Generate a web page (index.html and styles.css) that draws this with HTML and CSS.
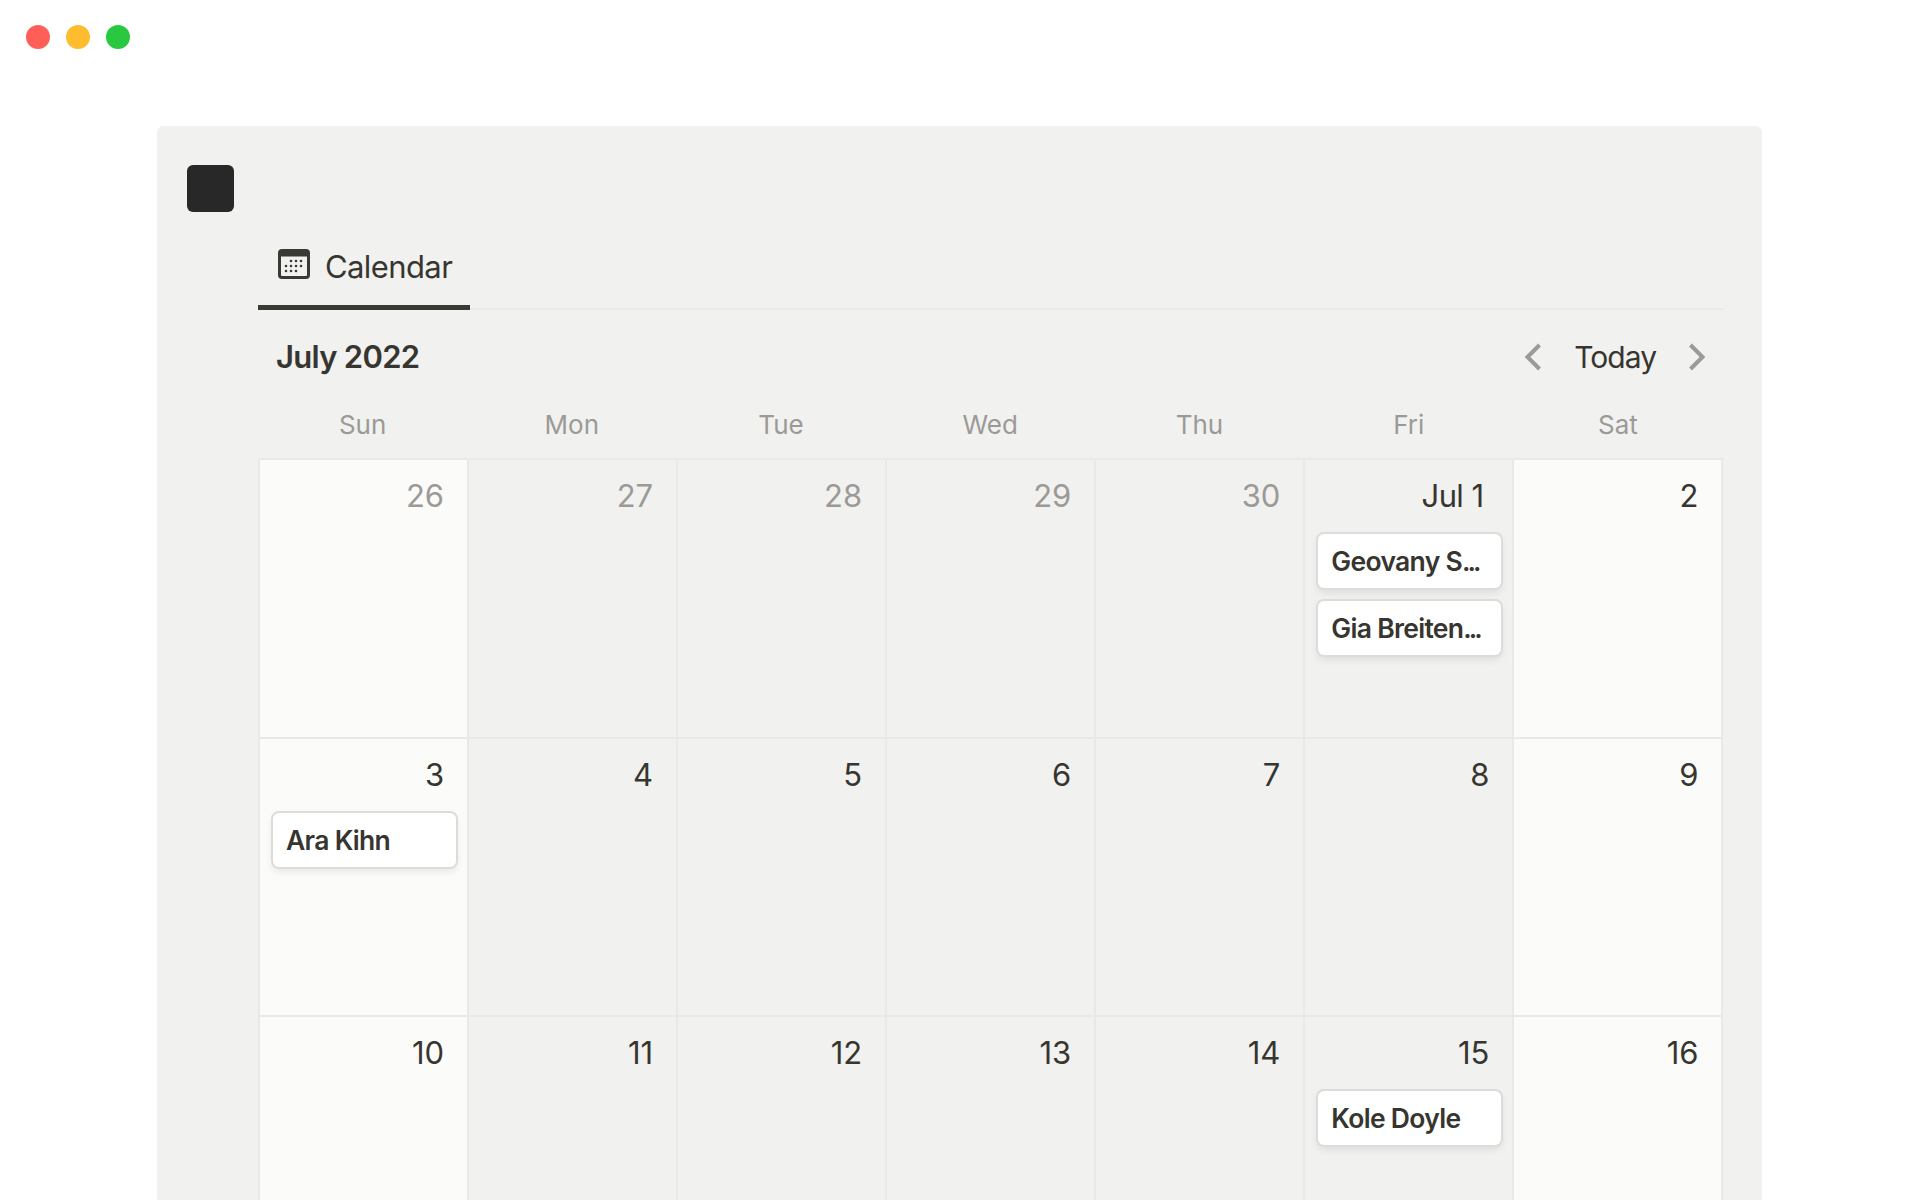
FILE: index.html
```html
<!DOCTYPE html>
<html lang="en">
<head>
<meta charset="utf-8">
<title>Calendar</title>
<link rel="stylesheet" href="styles.css">
</head>
<body>
<div class="lights"><span class="dot red"></span><span class="dot yellow"></span><span class="dot green"></span></div>
<main class="panel">
  <div class="icon-square"></div>
  <div class="content">
    <div class="tabs">
      <div class="tab">
        <svg class="cal-icon" viewBox="0 0 32 30" width="32" height="30">
          <path fill="#3a3933" fill-rule="evenodd" d="M4 0h24a4 4 0 0 1 4 4v22a4 4 0 0 1-4 4H4a4 4 0 0 1-4-4V4a4 4 0 0 1 4-4zM3 7.500V26a1 1 0 0 0 1 1h24a1 1 0 0 0 1-1V7.500z"/>
          <g fill="#3a3933"><circle cx="13" cy="12" r="1.300"/><circle cx="18" cy="12" r="1.300"/><circle cx="23" cy="12" r="1.300"/><circle cx="8" cy="17" r="1.300"/><circle cx="13" cy="17" r="1.300"/><circle cx="18" cy="17" r="1.300"/><circle cx="23" cy="17" r="1.300"/><circle cx="8" cy="22" r="1.300"/><circle cx="13" cy="22" r="1.300"/><circle cx="18" cy="22" r="1.300"/></g>
        </svg>
        <span>Calendar</span>
      </div>
    </div>
    <div class="toolbar">
      <h1 class="month">July 2022</h1>
      <div class="nav">
        <svg class="chev" viewBox="0 0 18 28" width="18" height="28"><path d="M15.500 2 3.500 14 15.500 26" fill="none" stroke="#9b9a97" stroke-width="4"/></svg>
        <span class="today">Today</span>
        <svg class="chev" viewBox="0 0 18 28" width="18" height="28"><path d="M2.500 2 14.500 14 2.500 26" fill="none" stroke="#9b9a97" stroke-width="4"/></svg>
      </div>
    </div>
    <div class="weekdays"><div>Sun</div><div>Mon</div><div>Tue</div><div>Wed</div><div>Thu</div><div>Fri</div><div>Sat</div></div>
    <div class="grid">
      <div class="cell weekend"><div class="date muted">26</div></div>
      <div class="cell"><div class="date muted">27</div></div>
      <div class="cell"><div class="date muted">28</div></div>
      <div class="cell"><div class="date muted">29</div></div>
      <div class="cell"><div class="date muted">30</div></div>
      <div class="cell"><div class="date first-of-month">Jul 1</div><div class="card">Geovany S<span class="dots">...</span></div><div class="card">Gia Breiten<span class="dots">...</span></div></div>
      <div class="cell weekend"><div class="date">2</div></div>

      <div class="cell weekend"><div class="date">3</div><div class="card">Ara Kihn</div></div>
      <div class="cell"><div class="date">4</div></div>
      <div class="cell"><div class="date">5</div></div>
      <div class="cell"><div class="date">6</div></div>
      <div class="cell"><div class="date">7</div></div>
      <div class="cell"><div class="date">8</div></div>
      <div class="cell weekend"><div class="date">9</div></div>

      <div class="cell weekend"><div class="date">10</div></div>
      <div class="cell"><div class="date">11</div></div>
      <div class="cell"><div class="date">12</div></div>
      <div class="cell"><div class="date">13</div></div>
      <div class="cell"><div class="date">14</div></div>
      <div class="cell"><div class="date">15</div><div class="card">Kole Doyle</div></div>
      <div class="cell weekend"><div class="date">16</div></div>
    </div>
  </div>
</main>
</body>
</html>
```
FILE: styles.css
```css
* { box-sizing: border-box; }
html, body { margin: 0; height: 1200px; overflow: hidden; background: #fff; }
body { font-family: Inter, "Liberation Sans", sans-serif; color: #37352f; }
.lights { display: flex; gap: 16px; padding: 25px 0 0 26px; height: 126px; }
.dot { width: 24px; height: 24px; border-radius: 50%; }
.red { background: #ff5f57; }
.yellow { background: #febc2e; }
.green { background: #28c840; }
.panel { margin: 0 158px 0 157px; height: 1074px; overflow: hidden; background: #f1f1ef; border-radius: 6px 6px 0 0; padding: 39px 38px 0 30px; }
.icon-square { width: 47px; height: 47px; border-radius: 6px; background: #282828; }
.content { margin: 0 0 0 71px; }
.tabs { margin-top: 26px; height: 72px; border-bottom: 2px solid #e9e9e7; display: flex; }
.tab { width: 212px; height: 72px; border-bottom: 5px solid #3a3933; display: flex; align-items: center; gap: 15px; padding: 0 0 10px 20px; font-size: 31px; color: #37352f; letter-spacing: -0.6px; }
.cal-icon { flex: none; margin-top: -6px; }
.toolbar { display: flex; justify-content: space-between; align-items: center; height: 97px; padding: 0 18px 4px 18px; }
.month { margin: 0; font-size: 31px; font-weight: 600; color: #37352f; letter-spacing: -0.7px; }
.nav { display: flex; align-items: center; gap: 32px; }
.today { font-size: 30px; color: #37352f; letter-spacing: -1px; }
.weekdays { display: grid; grid-template-columns: repeat(7, 1fr); width: 1465.500px; height: 51px; font-size: 26px; color: #9b9a97; text-align: center; align-items: start; padding-right: 1px; }
.weekdays div { line-height: 36px; }
.grid { display: grid; grid-template-columns: repeat(7, 1fr); grid-auto-rows: 278.500px; width: 1465.500px; border-top: 2px solid #e9e9e7; border-left: 2px solid #e9e9e7; }
.cell { border-right: 2px solid #e9e9e7; border-bottom: 2px solid #e9e9e7; padding: 18px 11px 0 13px; }
.weekend { background: #fbfbfa; }
.date { height: 36px; line-height: 36px; font-size: 31px; text-align: right; padding-right: 12px; color: #37352f; margin-bottom: 20px; }
.first-of-month { padding-right: 18px; letter-spacing: -0.6px; }
.muted { color: #9b9a97; }
.card { height: 54px; line-height: 54px; margin: 0 0 13px 0; padding-left: 13px; background: #fff; border-radius: 6px; font-size: 26.500px; font-weight: 600; color: #37352f; letter-spacing: -0.7px; box-shadow: 0 0 0 2px #dcdcda, 0 4px 8px rgba(15,15,15,.1); white-space: nowrap; overflow: hidden; }
.dots { letter-spacing: -3px; }
```
